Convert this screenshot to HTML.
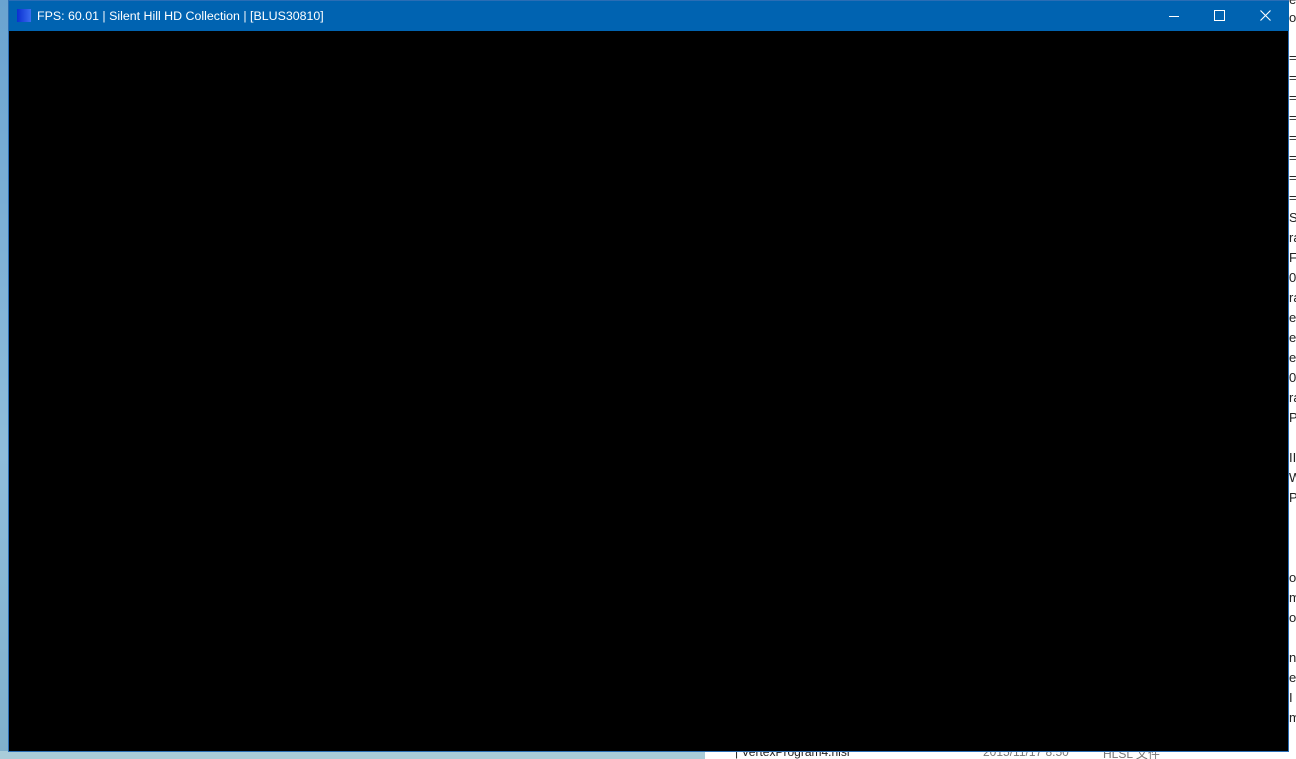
<!DOCTYPE html>
<html><head><meta charset="utf-8"><style>
html,body{margin:0;padding:0;width:1296px;height:759px;overflow:hidden;background:#9cc3dc;font-family:"Liberation Sans","Noto Sans CJK SC",sans-serif}
.left{position:absolute;left:0;top:0;width:8px;height:759px;background:linear-gradient(#6aa3d0,#8fbddb 60%,#7fb0cc)}
.bottom{position:absolute;left:0;top:751px;width:705px;height:8px;background:#a9ccd9}
.exp{position:absolute;left:705px;top:751px;width:591px;height:8px;background:#fff;font-size:12px;color:#222;overflow:hidden}
.right{position:absolute;left:1289px;top:0;width:7px;height:759px;background:#fff;font-size:13px;color:#222;overflow:hidden}
.right div{position:absolute;left:0;white-space:nowrap}
.win{position:absolute;left:8px;top:0;width:1281px;height:752px;background:#000;border:1px solid #2a6db5;box-sizing:border-box}
.tb{position:absolute;left:0;top:0;width:1280px;height:30px;background:#0063b1;color:#fff;font-size:12.4px}
.tb .t{position:absolute;left:28px;top:8px}
.ic{position:absolute;left:8px;top:8px;width:14px;height:13px;background:linear-gradient(90deg,#0a2fd0,#3a6cf0)}
.btn{position:absolute;top:0;width:46px;height:30px}
</style></head><body>
<div class="left"></div>
<div class="bottom"></div>
<div class="exp"><span style="position:absolute;left:30px;top:-6px">|&nbsp;VertexProgram4.hlsl</span><span style="position:absolute;left:278px;top:-6px;color:#777">2015/11/17 8:50</span><span style="position:absolute;left:398px;top:-6px;color:#777">HLSL 文件</span></div>
<div class="right">
<div style="top:-8px">e</div><div style="top:10px">o</div>
<div style="top:50px">=</div><div style="top:70px">=</div><div style="top:90px">=</div><div style="top:110px">=</div><div style="top:130px">=</div><div style="top:150px">=</div><div style="top:170px">=</div><div style="top:190px">=</div>
<div style="top:210px">S</div><div style="top:230px">ra</div><div style="top:250px">Fl</div><div style="top:270px">0</div><div style="top:290px">ra</div><div style="top:310px">er</div><div style="top:330px">eF</div><div style="top:350px">es</div><div style="top:370px">0</div><div style="top:390px">ra</div><div style="top:410px">Pl</div>
<div style="top:450px">II</div><div style="top:470px">W</div><div style="top:490px">P</div>
<div style="top:570px">o</div><div style="top:590px">m</div><div style="top:610px">o</div><div style="top:650px">n</div><div style="top:670px">ec</div><div style="top:690px">I</div><div style="top:710px">m</div>
</div>
<div class="win">
<div class="tb">
<div class="ic"></div>
<div class="t">FPS: 60.01 | Silent Hill HD Collection | [BLUS30810]</div>
<svg class="btn" style="left:1142px" viewBox="0 0 46 30"><line x1="18" y1="15.5" x2="28" y2="15.5" stroke="#fff" stroke-width="1"/></svg>
<svg class="btn" style="left:1188px" viewBox="0 0 46 30"><rect x="17.5" y="9.5" width="10" height="10" fill="none" stroke="#fff" stroke-width="1"/></svg>
<svg class="btn" style="left:1234px" viewBox="0 0 46 30"><path d="M17.5 9.5L27.5 19.5M27.5 9.5L17.5 19.5" stroke="#fff" stroke-width="1.1"/></svg>
</div>
</div>
</body></html>
